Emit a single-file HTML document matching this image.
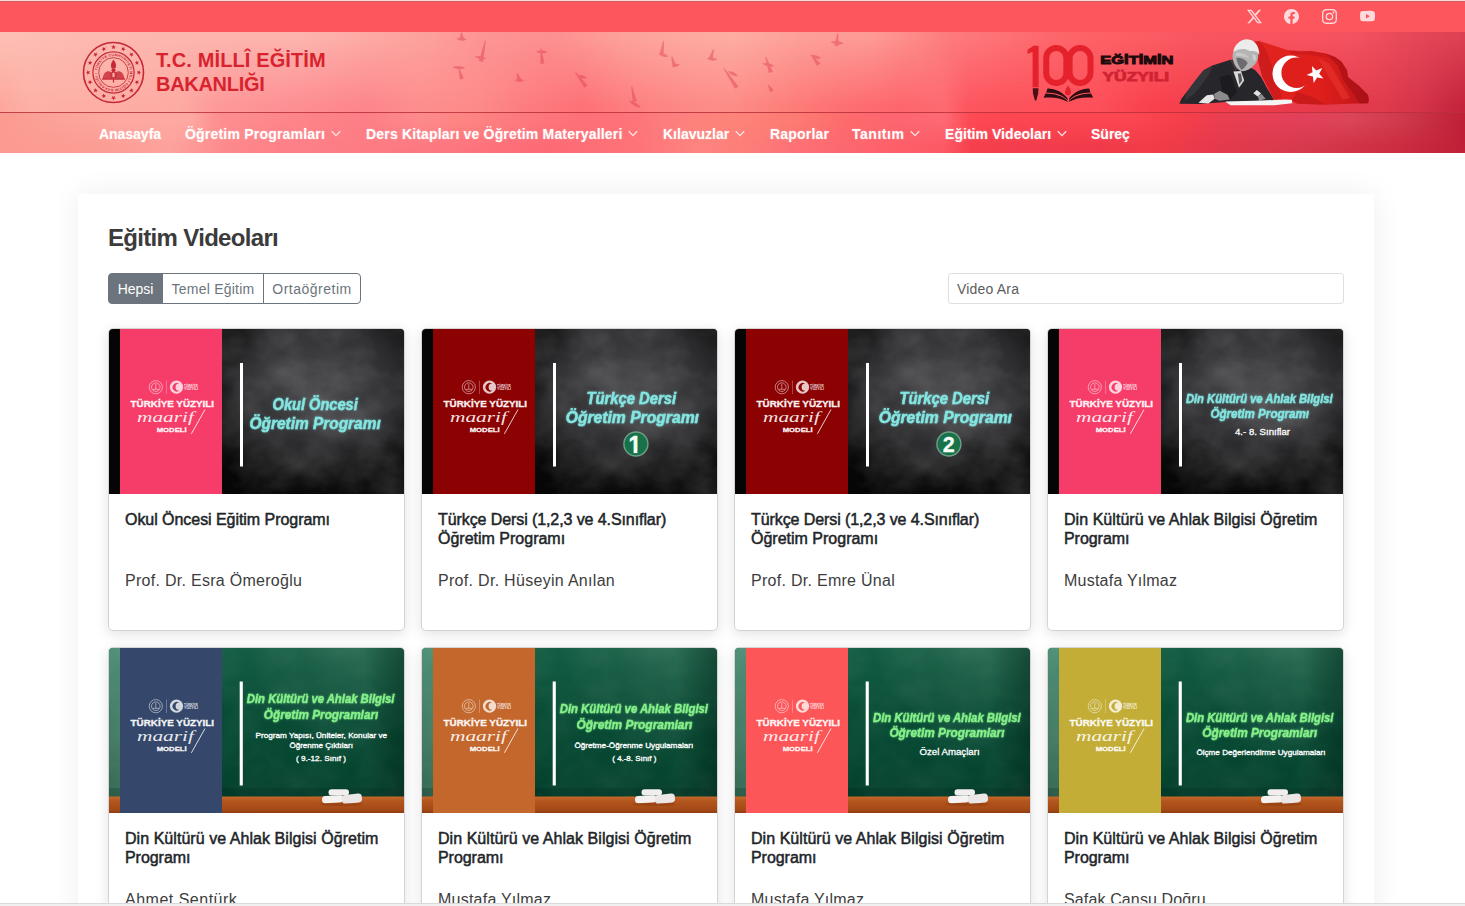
<!DOCTYPE html>
<html lang="tr">
<head>
<meta charset="utf-8">
<title>Eğitim Videoları - T.C. Millî Eğitim Bakanlığı</title>
<style>
*{box-sizing:border-box;margin:0;padding:0}
html,body{width:1465px;height:906px;overflow:hidden;background:#fff}
body{font-family:"Liberation Sans",sans-serif;position:relative;color:#212529}
.abs{position:absolute}
#topline{left:0;top:0;width:1465px;height:2px;background:linear-gradient(180deg,#ffd6d6 0,#ffd6d6 50%,#cb636b 50%,#cb636b 100%)}
#topbar{left:0;top:2px;width:1465px;height:30px;background:#fd565d}
.soc{top:9px;width:15px;height:15px;fill:#ffd9db}
.brand{left:156px;color:#d8232f;font-weight:bold;font-size:20px;line-height:24px;white-space:nowrap}
.nav{top:124px;height:20px;line-height:20px;font-size:14px;font-weight:bold;color:#fff;white-space:nowrap;text-shadow:0 0 2px rgba(255,255,255,.35)}
.chev{top:130px;width:10px;height:7px;fill:none;stroke:#ffe3e3;stroke-width:1.3}
#wrap{left:78px;top:194px;width:1296px;height:760px;background:#fff;box-shadow:0 0 28px rgba(0,0,0,.07)}
h1{left:108px;top:222px;font-size:24px;line-height:32px;font-weight:bold;color:#3b3b3b;white-space:nowrap;letter-spacing:-.68px}
.btn{top:273px;height:31px;font-size:14px;line-height:30px;color:#6c757d;border:1px solid #6c757d;background:#fff;white-space:nowrap;text-align:center}
.btn.on{background:#6c757d;color:#fff;border-radius:4px 0 0 4px}
#search{left:948px;top:273px;width:396px;height:31px;border:1px solid #dfdfdf;border-radius:3px;font-size:14px;line-height:31px;color:#5c5c5c;padding-left:8px;letter-spacing:.19px}
.card{width:297px;height:303px;background:#fff;border:1px solid #d4d4d4;border-radius:5px;box-shadow:0 3px 13px rgba(0,0,0,.12);overflow:hidden}
.thumb{position:absolute;left:0;top:0;width:295px;height:165px;overflow:hidden}
.ct{position:absolute;left:16px;font-size:16px;line-height:19px;font-weight:normal;color:#212529;-webkit-text-stroke:.5px #212529;white-space:nowrap}
.au{position:absolute;left:16px;top:240px;font-size:16px;line-height:24px;color:#3d3d3d;white-space:nowrap}
#botbar{left:0;top:903px;width:1465px;height:3px;background:#f0f0f0;border-top:1px solid #d9d9d9}
</style>
</head>
<body>
<div id="topline" class="abs"></div>
<div id="topbar" class="abs"></div>
<svg class="abs" width="0" height="0" style="left:0;top:0"><defs>
<filter id="glow" x="-10%" y="-40%" width="120%" height="180%"><feGaussianBlur stdDeviation="1.2" result="b"/><feComponentTransfer in="b" result="c"><feFuncA type="linear" slope=".5"/></feComponentTransfer><feMerge><feMergeNode in="c"/><feMergeNode in="SourceGraphic"/></feMerge></filter>
<filter id="chalk" x="0" y="0" width="100%" height="100%"><feTurbulence type="fractalNoise" baseFrequency=".02 .026" numOctaves="4" seed="7"/><feColorMatrix type="matrix" values="0 0 0 0 1  0 0 0 0 1  0 0 0 0 1  1.6 0 0 0 -.55"/></filter>
<filter id="bblur" x="-5%" y="-5%" width="110%" height="110%"><feGaussianBlur stdDeviation=".7"/></filter>
<linearGradient id="gedge" x1="0" y1="0" x2="1" y2="0"><stop offset="0" stop-color="#001a10" stop-opacity="0"/><stop offset="1" stop-color="#001a10" stop-opacity=".35"/></linearGradient>
</defs></svg>
<svg class="abs" style="left:0;top:32px" width="1465" height="121" viewBox="0 0 1465 121" preserveAspectRatio="none">
<defs><linearGradient id="hr1" gradientUnits="userSpaceOnUse" x1="0" y1="0" x2="1465" y2="0"><stop offset="0.0000" stop-color="#fdbfb4"/><stop offset="0.0546" stop-color="#fdb9b0"/><stop offset="0.1365" stop-color="#fdb5ae"/><stop offset="0.2048" stop-color="#fdb4ae"/><stop offset="0.2498" stop-color="#fdaaa4"/><stop offset="0.2935" stop-color="#fda09c"/><stop offset="0.3276" stop-color="#fd9595"/><stop offset="0.3754" stop-color="#fd8f90"/><stop offset="0.4232" stop-color="#fda099"/><stop offset="0.4642" stop-color="#fda89f"/><stop offset="0.4997" stop-color="#fdaca2"/><stop offset="0.5461" stop-color="#fd9f98"/><stop offset="0.5939" stop-color="#fd9a94"/><stop offset="0.6280" stop-color="#fd8886"/><stop offset="0.6485" stop-color="#fd7a7c"/><stop offset="0.6826" stop-color="#fd7275"/><stop offset="0.7167" stop-color="#fd676b"/><stop offset="0.7495" stop-color="#fd6066"/><stop offset="0.7850" stop-color="#fb5c63"/><stop offset="0.8191" stop-color="#f85560"/><stop offset="0.8874" stop-color="#f8525e"/><stop offset="0.9215" stop-color="#f45260"/><stop offset="0.9556" stop-color="#e84a5a"/><stop offset="0.9829" stop-color="#e04455"/><stop offset="1.0000" stop-color="#dc4052"/></linearGradient><linearGradient id="hr2" gradientUnits="userSpaceOnUse" x1="0" y1="0" x2="1465" y2="0"><stop offset="0.0000" stop-color="#fda79c"/><stop offset="0.0205" stop-color="#fdb0a6"/><stop offset="0.0683" stop-color="#fdaea5"/><stop offset="0.1229" stop-color="#fdaaa2"/><stop offset="0.1468" stop-color="#fd9a9a"/><stop offset="0.1911" stop-color="#fd9094"/><stop offset="0.2498" stop-color="#fd858c"/><stop offset="0.2867" stop-color="#fd8e8e"/><stop offset="0.3276" stop-color="#fd8a88"/><stop offset="0.3549" stop-color="#fd7e80"/><stop offset="0.3959" stop-color="#fd7176"/><stop offset="0.4437" stop-color="#fd8382"/><stop offset="0.4778" stop-color="#fd8a86"/><stop offset="0.4997" stop-color="#fd8c86"/><stop offset="0.5392" stop-color="#fd7d79"/><stop offset="0.5734" stop-color="#fd7072"/><stop offset="0.6143" stop-color="#fd666c"/><stop offset="0.6444" stop-color="#fd6a70"/><stop offset="0.6608" stop-color="#fd5660"/><stop offset="0.6826" stop-color="#fd525c"/><stop offset="0.7495" stop-color="#fc4f5a"/><stop offset="0.7850" stop-color="#f9414d"/><stop offset="0.8874" stop-color="#e83a4a"/><stop offset="0.9420" stop-color="#e03a4c"/><stop offset="0.9693" stop-color="#d4344a"/><stop offset="0.9898" stop-color="#c82840"/><stop offset="1.0000" stop-color="#c4243c"/></linearGradient><linearGradient id="hr3" gradientUnits="userSpaceOnUse" x1="0" y1="0" x2="1465" y2="0"><stop offset="0.0000" stop-color="#fc9a8f"/><stop offset="0.0273" stop-color="#fca095"/><stop offset="0.0819" stop-color="#fda9a1"/><stop offset="0.1297" stop-color="#fda9a1"/><stop offset="0.1488" stop-color="#fd8f90"/><stop offset="0.2048" stop-color="#fd8489"/><stop offset="0.2498" stop-color="#fd7e86"/><stop offset="0.2867" stop-color="#fd8a8c"/><stop offset="0.3208" stop-color="#fd8480"/><stop offset="0.3549" stop-color="#fd7a7e"/><stop offset="0.3959" stop-color="#fd7076"/><stop offset="0.4232" stop-color="#fd7278"/><stop offset="0.4642" stop-color="#fd807e"/><stop offset="0.4997" stop-color="#fd8479"/><stop offset="0.5461" stop-color="#fd7a72"/><stop offset="0.5802" stop-color="#fd6a6c"/><stop offset="0.6143" stop-color="#fd6570"/><stop offset="0.6444" stop-color="#fd6a74"/><stop offset="0.6621" stop-color="#fd4a55"/><stop offset="0.6826" stop-color="#fd4652"/><stop offset="0.7495" stop-color="#fc4651"/><stop offset="0.7713" stop-color="#fb4752"/><stop offset="0.8055" stop-color="#f53f4a"/><stop offset="0.8328" stop-color="#ea3e50"/><stop offset="0.8874" stop-color="#e2405a"/><stop offset="0.9215" stop-color="#dc4458"/><stop offset="0.9556" stop-color="#d03a4c"/><stop offset="0.9829" stop-color="#c42a40"/><stop offset="1.0000" stop-color="#be2038"/></linearGradient><linearGradient id="hr4" gradientUnits="userSpaceOnUse" x1="0" y1="0" x2="1465" y2="0"><stop offset="0.0000" stop-color="#fc9a90"/><stop offset="0.0683" stop-color="#fc9c93"/><stop offset="0.1160" stop-color="#fda29c"/><stop offset="0.1365" stop-color="#fd9694"/><stop offset="0.1536" stop-color="#fd8a8c"/><stop offset="0.1911" stop-color="#fd8088"/><stop offset="0.2498" stop-color="#fd7c84"/><stop offset="0.3072" stop-color="#fd7680"/><stop offset="0.3754" stop-color="#fd6a74"/><stop offset="0.4369" stop-color="#fd7478"/><stop offset="0.4778" stop-color="#fd8580"/><stop offset="0.5188" stop-color="#fd7a78"/><stop offset="0.5461" stop-color="#fd6f75"/><stop offset="0.6143" stop-color="#fd5f68"/><stop offset="0.6444" stop-color="#fc5963"/><stop offset="0.6635" stop-color="#f53f4e"/><stop offset="0.7509" stop-color="#f03a4a"/><stop offset="0.7850" stop-color="#f23c47"/><stop offset="0.8328" stop-color="#e4394c"/><stop offset="0.8874" stop-color="#d63a4d"/><stop offset="0.9556" stop-color="#cc2c40"/><stop offset="1.0000" stop-color="#c02038"/></linearGradient>
<linearGradient id="hvm" gradientUnits="userSpaceOnUse" x1="0" y1="0" x2="0" y2="81"><stop offset="0" stop-color="#000"/><stop offset=".08" stop-color="#000"/><stop offset=".92" stop-color="#fff"/><stop offset="1" stop-color="#fff"/></linearGradient>
<linearGradient id="hvn" gradientUnits="userSpaceOnUse" x1="0" y1="81" x2="0" y2="121"><stop offset="0" stop-color="#000"/><stop offset=".2" stop-color="#000"/><stop offset=".85" stop-color="#fff"/><stop offset="1" stop-color="#fff"/></linearGradient>
<mask id="hmask" maskUnits="userSpaceOnUse" x="0" y="0" width="1465" height="81"><rect width="1465" height="81" fill="url(#hvm)"/></mask>
<mask id="nmask" maskUnits="userSpaceOnUse" x="0" y="81" width="1465" height="40"><rect y="81" width="1465" height="40" fill="url(#hvn)"/></mask></defs>
<rect width="1465" height="81" fill="url(#hr1)"/>
<rect width="1465" height="81" fill="url(#hr2)" mask="url(#hmask)"/>
<rect y="81" width="1465" height="40" fill="url(#hr3)"/>
<rect y="81" width="1465" height="40" fill="url(#hr4)" mask="url(#nmask)"/>
<rect y="80" width="1465" height="1" fill="#b8303a" fill-opacity=".85"/>
</svg>
<svg class="abs" style="left:0;top:32px" width="1465" height="121" viewBox="0 32 1465 121" fill="rgba(220,58,78,.42)"><g filter="url(#bblur)">
<path d="M460.9 32.5 L459.8 38.8 L464.0 38.4 L461.9 32.5Z M456.5 38.8 Q461.5 42.3 466.8 39.4 Q461.8 35.9 456.5 38.8Z"/>
<path d="M484.9 40.6 L478.9 61.1 L483.1 61.9 L485.9 40.8Z M474.5 56.6 Q479.9 60.8 486.5 58.8 Q481.1 54.6 474.5 56.6Z"/>
<path d="M458.2 68.1 L459.9 79.6 L463.9 78.4 L459.2 67.9Z M452.6 67.2 Q458.7 70.8 465.2 68.0 Q459.1 64.4 452.6 67.2Z"/>
<path d="M540.4 48.4 L540.3 63.9 L544.5 63.5 L541.4 48.4Z M535.7 51.7 Q541.6 55.0 547.7 51.9 Q541.8 48.6 535.7 51.7Z"/>
<path d="M516.6 73.7 L517.3 80.7 L521.3 79.3 L517.6 73.3Z M514.4 80.0 Q519.1 83.5 524.2 80.6 Q519.5 77.1 514.4 80.0Z"/>
<path d="M575.1 72.7 L584.2 87.8 L587.6 85.4 L575.9 72.1Z M577.2 75.7 Q581.4 79.9 587.0 77.9 Q582.8 73.7 577.2 75.7Z"/>
<path d="M631.2 86.4 L632.7 102.0 L636.9 101.2 L632.2 86.2Z M628.6 100.6 Q633.1 107.0 640.9 107.8 Q636.4 101.4 628.6 100.6Z"/>
<path d="M663.0 41.1 L659.3 55.3 L663.5 55.9 L664.0 41.3Z M658.3 53.5 Q662.5 58.1 668.6 56.6 Q664.4 52.0 658.3 53.5Z"/>
<path d="M671.2 56.7 L672.7 67.4 L676.7 66.2 L672.2 56.5Z M671.7 65.8 Q676.1 68.5 679.8 64.8 Q675.4 62.1 671.7 65.8Z"/>
<path d="M713.1 49.2 L708.6 57.9 L712.6 59.3 L714.1 49.6Z M706.5 58.6 Q711.8 62.3 717.7 59.6 Q712.4 55.9 706.5 58.6Z"/>
<path d="M723.7 68.9 L734.9 88.8 L738.5 86.4 L724.5 68.3Z M727.9 71.2 Q731.5 76.6 738.0 76.2 Q734.4 70.8 727.9 71.2Z"/>
<path d="M837.3 33.2 L834.4 45.7 L838.6 46.1 L838.3 33.4Z M830.2 42.1 Q836.9 45.9 844.1 43.4 Q837.4 39.6 830.2 42.1Z"/>
<path d="M765.3 57.5 L768.8 73.1 L772.8 71.7 L766.3 57.1Z M762.0 63.6 Q767.7 68.0 774.6 66.1 Q768.9 61.7 762.0 63.6Z"/>
<path d="M810.8 55.0 L817.1 66.1 L820.5 63.5 L811.6 54.4Z M810.7 55.2 Q815.0 59.9 821.3 58.5 Q817.0 53.8 810.7 55.2Z"/>
<path d="M767.9 85.3 L770.3 92.5 L773.9 90.3 L768.7 84.7Z"/>
</g></svg>
<svg class="abs soc" style="left:1247px" viewBox="0 0 16 16"><path d="M12.6.75h2.454l-5.36 6.142L16 15.25h-4.937l-3.867-5.07-4.425 5.07H.316l5.733-6.57L0 .75h5.063l3.495 4.633L12.601.75Zm-.86 13.028h1.36L4.323 2.145H2.865z"/></svg>
<svg class="abs soc" style="left:1284px" viewBox="0 0 16 16"><path d="M16 8.049c0-4.446-3.582-8.05-8-8.05C3.58 0-.002 3.603-.002 8.05c0 4.017 2.926 7.347 6.75 7.951v-5.625h-2.03V8.05H6.75V6.275c0-2.017 1.195-3.131 3.022-3.131.876 0 1.791.157 1.791.157v1.98h-1.009c-.993 0-1.303.621-1.303 1.258v1.51h2.218l-.354 2.326H9.25V16c3.824-.604 6.75-3.934 6.75-7.951"/></svg>
<svg class="abs soc" style="left:1321.5px" viewBox="0 0 16 16"><path d="M8 0C5.829 0 5.556.01 4.703.048 3.85.088 3.269.222 2.76.42a3.9 3.9 0 0 0-1.417.923A3.9 3.9 0 0 0 .42 2.76C.222 3.268.087 3.85.048 4.7.01 5.555 0 5.827 0 8.001c0 2.172.01 2.444.048 3.297.04.852.174 1.433.372 1.942.205.526.478.972.923 1.417.444.445.89.719 1.416.923.51.198 1.09.333 1.942.372C5.555 15.99 5.827 16 8 16s2.444-.01 3.298-.048c.851-.04 1.434-.174 1.943-.372a3.9 3.9 0 0 0 1.416-.923c.445-.445.718-.891.923-1.417.197-.509.332-1.09.372-1.942C15.99 10.445 16 10.173 16 8s-.01-2.445-.048-3.299c-.04-.851-.175-1.433-.372-1.941a3.9 3.9 0 0 0-.923-1.417A3.9 3.9 0 0 0 13.24.42c-.51-.198-1.092-.333-1.943-.372C10.443.01 10.172 0 7.998 0zm-.717 1.442h.718c2.136 0 2.389.007 3.232.046.78.035 1.204.166 1.486.275.373.145.64.319.92.599s.453.546.598.92c.11.281.24.705.275 1.485.039.843.047 1.096.047 3.231s-.008 2.389-.047 3.232c-.035.78-.166 1.203-.275 1.485a2.5 2.5 0 0 1-.599.919c-.28.28-.546.453-.92.598-.28.11-.704.24-1.485.276-.843.038-1.096.047-3.232.047s-2.39-.009-3.233-.047c-.78-.036-1.203-.166-1.485-.276a2.5 2.5 0 0 1-.92-.598 2.5 2.5 0 0 1-.6-.92c-.109-.281-.24-.705-.275-1.485-.038-.843-.046-1.096-.046-3.233s.008-2.388.046-3.231c.036-.78.166-1.204.276-1.486.145-.373.319-.64.599-.92s.546-.453.92-.598c.282-.11.705-.24 1.485-.276.738-.034 1.024-.044 2.515-.045zm4.988 1.328a.96.96 0 1 0 0 1.92.96.96 0 0 0 0-1.92m-4.27 1.122a4.109 4.109 0 1 0 0 8.217 4.109 4.109 0 0 0 0-8.217m0 1.441a2.667 2.667 0 1 1 0 5.334 2.667 2.667 0 0 1 0-5.334"/></svg>
<svg class="abs soc" style="left:1359.5px" viewBox="0 0 16 16"><path d="M8.051 1.999h.089c.822.003 4.987.033 6.11.335a2.01 2.01 0 0 1 1.415 1.42c.101.38.172.883.22 1.402l.01.104.022.26.008.104c.065.914.073 1.77.074 1.957v.075c-.001.194-.01 1.108-.082 2.06l-.008.105-.009.104c-.05.572-.124 1.14-.235 1.558a2.01 2.01 0 0 1-1.415 1.42c-1.16.312-5.569.334-6.18.335h-.142c-.309 0-1.587-.006-2.927-.052l-.17-.006-.087-.004-.171-.007-.171-.007c-1.11-.049-2.167-.128-2.654-.26a2.01 2.01 0 0 1-1.415-1.419c-.111-.417-.185-.986-.235-1.558L.09 9.82l-.008-.104A31 31 0 0 1 0 7.68v-.123c.002-.215.01-.958.064-1.778l.007-.103.003-.052.008-.104.022-.26.01-.104c.048-.519.119-1.023.22-1.402a2.01 2.01 0 0 1 1.415-1.42c.487-.13 1.544-.21 2.654-.26l.17-.007.172-.006.086-.003.171-.007A100 100 0 0 1 7.858 2zM6.4 5.209v4.818l4.157-2.408z"/></svg>
<svg class="abs" style="left:78px;top:37px" width="72" height="72" viewBox="78 37 72 72">
<g fill="none" stroke="#c52836">
<circle cx="113.5" cy="72.5" r="30" stroke-width="1.6"/>
<circle cx="113.5" cy="72.5" r="20.6" stroke-width="1.25"/>
<circle cx="113.5" cy="72.5" r="14.8" stroke-width=".85"/>
</g>
<g fill="#c52836">
<polygon points="113.50,44.60 114.12,46.25 115.88,46.33 114.50,47.42 114.97,49.12 113.50,48.15 112.03,49.12 112.50,47.42 111.12,46.33 112.88,46.25"/>
<polygon points="124.18,46.72 124.12,48.48 125.71,49.23 124.02,49.72 123.80,51.46 122.82,50.00 121.09,50.34 122.17,48.95 121.32,47.41 122.98,48.01"/>
<polygon points="133.23,52.77 132.50,54.38 133.69,55.67 131.94,55.48 131.07,57.01 130.72,55.28 128.99,54.93 130.52,54.06 130.33,52.31 131.62,53.50"/>
<polygon points="139.28,61.82 137.99,63.02 138.59,64.68 137.05,63.83 135.66,64.91 136.00,63.18 134.54,62.20 136.28,61.98 136.77,60.29 137.52,61.88"/>
<polygon points="141.40,72.50 139.75,73.12 139.67,74.88 138.58,73.50 136.88,73.97 137.85,72.50 136.88,71.03 138.58,71.50 139.67,70.12 139.75,71.88"/>
<polygon points="139.28,83.18 137.52,83.12 136.77,84.71 136.28,83.02 134.54,82.80 136.00,81.82 135.66,80.09 137.05,81.17 138.59,80.32 137.99,81.98"/>
<polygon points="133.23,92.23 131.62,91.50 130.33,92.69 130.52,90.94 128.99,90.07 130.72,89.72 131.07,87.99 131.94,89.52 133.69,89.33 132.50,90.62"/>
<polygon points="124.18,98.28 122.98,96.99 121.32,97.59 122.17,96.05 121.09,94.66 122.82,95.00 123.80,93.54 124.02,95.28 125.71,95.77 124.12,96.52"/>
<polygon points="113.50,100.40 112.88,98.75 111.12,98.67 112.50,97.58 112.03,95.88 113.50,96.85 114.97,95.88 114.50,97.58 115.88,98.67 114.12,98.75"/>
<polygon points="102.82,98.28 102.88,96.52 101.29,95.77 102.98,95.28 103.20,93.54 104.18,95.00 105.91,94.66 104.83,96.05 105.68,97.59 104.02,96.99"/>
<polygon points="93.77,92.23 94.50,90.62 93.31,89.33 95.06,89.52 95.93,87.99 96.28,89.72 98.01,90.07 96.48,90.94 96.67,92.69 95.38,91.50"/>
<polygon points="87.72,83.18 89.01,81.98 88.41,80.32 89.95,81.17 91.34,80.09 91.00,81.82 92.46,82.80 90.72,83.02 90.23,84.71 89.48,83.12"/>
<polygon points="85.60,72.50 87.25,71.88 87.33,70.12 88.42,71.50 90.12,71.03 89.15,72.50 90.12,73.97 88.42,73.50 87.33,74.88 87.25,73.12"/>
<polygon points="87.72,61.82 89.48,61.88 90.23,60.29 90.72,61.98 92.46,62.20 91.00,63.18 91.34,64.91 89.95,63.83 88.41,64.68 89.01,63.02"/>
<polygon points="93.77,52.77 95.38,53.50 96.67,52.31 96.48,54.06 98.01,54.93 96.28,55.28 95.93,57.01 95.06,55.48 93.31,55.67 94.50,54.38"/>
<polygon points="102.82,46.72 104.02,48.01 105.68,47.41 104.83,48.95 105.91,50.34 104.18,50.00 103.20,51.46 102.98,49.72 101.29,49.23 102.88,48.48"/>
</g>
<defs><path id="ringp" d="M 97.1 72.5 a 16.4 16.4 0 1 1 32.8 0 a 16.4 16.4 0 1 1 -32.8 0"/></defs>
<text font-family="Liberation Sans, sans-serif" font-size="3.6" font-weight="bold" fill="#c52836" letter-spacing=".25"><textPath href="#ringp" startOffset="2">TÜRKİYE CUMHURİYETİ MİLLÎ EĞİTİM BAKANLIĞI • 1920 •</textPath></text>
<g fill="#c52836">
<path d="M102.5 79.0 C103.5 70.5 109.5 69.5 112.5 73.5 L112.5 79.0Z" opacity=".8"/>
<path d="M124.5 79.0 C123.5 70.5 117.5 69.5 114.5 73.5 L114.5 79.0Z" opacity=".8"/>
<rect x="102.0" y="78.5" width="23" height="1.2"/>
<path d="M113.5 59.5 C116.5 63.5 116.5 66.5 115.1 68.5 L111.9 68.5 C110.5 66.5 110.5 63.5 113.5 59.5Z"/>
<circle cx="113.5" cy="70.3" r="2"/>
<circle cx="113.5" cy="75.1" r="2.9" fill="none" stroke="#c52836" stroke-width="1"/>
<rect x="112.9" y="77.5" width="1.2" height="5"/>
</g></svg>
<div class="abs brand" style="top:47.5px;letter-spacing:.12px">T.C. MİLLÎ EĞİTİM</div>
<div class="abs brand" style="top:71.5px;letter-spacing:-.3px">BAKANLIĞI</div>
<div class="abs nav" style="left:99px;letter-spacing:-0.030px">Anasayfa</div>
<div class="abs nav" style="left:185px;letter-spacing:0.203px">Öğretim Programları</div>
<div class="abs nav" style="left:366px;letter-spacing:0.177px">Ders Kitapları ve Öğretim Materyalleri</div>
<div class="abs nav" style="left:663px;letter-spacing:0.010px">Kılavuzlar</div>
<div class="abs nav" style="left:770px;letter-spacing:0.190px">Raporlar</div>
<div class="abs nav" style="left:852px;letter-spacing:0.531px">Tanıtım</div>
<div class="abs nav" style="left:945px;letter-spacing:0.045px">Eğitim Videoları</div>
<div class="abs nav" style="left:1091px;letter-spacing:0.000px">Süreç</div>
<svg class="abs chev" style="left:331px" viewBox="0 0 10 7"><path d="M.8 1.2 5 5.6 9.2 1.2"/></svg>
<svg class="abs chev" style="left:628px" viewBox="0 0 10 7"><path d="M.8 1.2 5 5.6 9.2 1.2"/></svg>
<svg class="abs chev" style="left:735px" viewBox="0 0 10 7"><path d="M.8 1.2 5 5.6 9.2 1.2"/></svg>
<svg class="abs chev" style="left:910px" viewBox="0 0 10 7"><path d="M.8 1.2 5 5.6 9.2 1.2"/></svg>
<svg class="abs chev" style="left:1057px" viewBox="0 0 10 7"><path d="M.8 1.2 5 5.6 9.2 1.2"/></svg>
<svg class="abs" style="left:1020px;top:36px" width="160" height="74" viewBox="1020 36 160 74">
<path fill="#e5212b" d="M1038.6 45.8 L1033.6 45.8 L1027.6 49.8 L1027.6 54 L1032.6 51.8 L1032.6 87.3 L1038.6 87.3Z"/>
<path fill="#4a1018" d="M1032.7 88.2 L1038.5 88.2 L1038.2 93.5 L1036.3 100.4 L1034.9 100.4 L1033 93.5Z"/>
<rect x="1046.25" y="48.05" width="20.1" height="34.9" rx="10.05" fill="none" stroke="#e5212b" stroke-width="6"/>
<rect x="1069.6" y="48.05" width="20.9" height="34.9" rx="10.4" fill="none" stroke="#e5212b" stroke-width="6"/>
<path fill="#e5212b" d="M1068 85.6 C1070.8 89.5 1071.6 92 1070.6 94 C1069.6 95.8 1066.4 95.8 1065.4 94 C1064.4 92 1065.2 89.5 1068 85.6Z"/>
<g fill="#2b0d12">
<path d="M1047.5 88.6 C1056 89 1063 92.5 1067.6 98.6 L1067.6 99.9 C1062 94.6 1055 92.6 1046.2 92.4Z"/>
<path d="M1045.6 93.6 C1055 93.8 1062 96 1067.6 100.8 L1067.6 101.8 C1061 98.2 1053 96.8 1043.6 97.8Z"/>
<path d="M1089.2 88.6 C1080.7 89 1073.7 92.5 1069.1 98.6 L1069.1 99.9 C1074.7 94.6 1081.7 92.6 1090.5 92.4Z"/>
<path d="M1091.1 93.6 C1081.7 93.8 1074.7 96 1069.1 100.8 L1069.1 101.8 C1075.7 98.2 1083.7 96.8 1093.1 97.8Z"/>
</g>
<text x="1100.3" y="63.9" font-family="Liberation Sans, sans-serif" font-weight="bold" font-size="11.4" fill="#1c0a0d" stroke="#1c0a0d" stroke-width=".9" textLength="73.2" lengthAdjust="spacingAndGlyphs">EĞİTİMİN</text>
<text x="1102.5" y="80.8" font-family="Liberation Sans, sans-serif" font-weight="bold" font-size="12.5" fill="#cf2334" stroke="#cf2334" stroke-width=".75" textLength="66.6" lengthAdjust="spacingAndGlyphs">YÜZYILI</text>
</svg>
<svg class="abs" style="left:1170px;top:32px" width="210" height="80" viewBox="1170 32 210 80">
<defs><linearGradient id="flg" x1="0" y1="0" x2="1" y2="0"><stop offset="0" stop-color="#e2241f"/><stop offset=".55" stop-color="#df1f1c"/><stop offset=".8" stop-color="#cf1a1a"/><stop offset="1" stop-color="#b81518"/></linearGradient></defs>
<polygon fill="url(#flg)" points="1253.0,42.0 1259.1,41.1 1272.0,45.0 1287.8,50.2 1300.0,51.6 1310.7,51.1 1326.0,53.5 1335.0,57.0 1341.3,61.6 1347.1,70.2 1348.0,76.9 1358.5,85.5 1368.1,95.1 1369.0,100.0 1368.1,103.2 1349.9,103.7 1326.0,104.7 1297.4,103.7 1291.6,100.8 1274.0,99.5 1262.0,76.0"/>
<polygon fill="#9e0f14" opacity=".55" points="1326.0,53.5 1335.0,57.0 1341.3,61.6 1347.1,70.2 1348.0,76.9 1358.5,85.5 1368.1,95.1 1368.1,103.2 1360.0,103.4 1352.0,92.0 1343.0,80.0 1338.0,66.0"/>
<polygon fill="#f2403a" opacity=".4" points="1318.0,58.0 1330.0,64.0 1339.0,80.0 1350.0,98.0 1343.0,100.0 1332.0,82.0"/>
<polygon fill="#a91116" opacity=".4" points="1297.0,92.0 1312.0,97.0 1326.0,104.7 1297.4,103.7 1291.6,100.8"/>
<polygon fill="#b81418" opacity=".45" points="1259.0,41.1 1266.0,50.0 1276.0,78.0 1282.0,98.0 1274.0,99.5 1262.0,76.0 1253.0,42.0"/>
<polygon fill="#ad1216" opacity=".3" points="1287.8,50.2 1310.7,51.1 1326.0,53.5 1330.0,58.0 1310.0,55.0 1292.0,54.0"/>
<circle cx="1290.7" cy="73.8" r="18.2" fill="#fff"/>
<circle cx="1296.6" cy="72.8" r="15.2" fill="#df1f1c"/>
<polygon fill="#fff" points="1306.6,75.0 1312.5,72.3 1311.9,65.9 1316.3,70.6 1322.3,68.1 1319.2,73.7 1323.4,78.6 1317.1,77.4 1313.7,82.9 1312.9,76.5"/>
<polygon fill="#27262b" points="1179.4,103.7 1181.4,98.8 1187.7,90.8 1195.7,80.1 1203.6,70.2 1212.4,65.4 1222.7,62.2 1230.6,59.8 1235.4,69.4 1248.1,66.2 1255.3,70.2 1261.2,77.3 1266.4,86.9 1272.0,96.4 1274.0,100.8 1254.5,101.6 1225.9,102.0 1198.8,104.0"/>
<polygon fill="#3d3c42" opacity=".7" points="1187.7,90.8 1195.7,80.1 1203.6,70.2 1212.4,66.2 1208.4,75.7 1201.2,85.3 1193.3,94.8 1184.5,100.4"/>
<polygon fill="#1a191d" opacity=".8" points="1219.5,77.3 1230.6,74.2 1237.0,91.6 1230.6,99.6 1222.7,91.6"/>
<polygon fill="#3a3a3e" points="1230.6,59.8 1235.4,69.4 1248.1,66.2 1246.5,59.8"/>
<path fill="#b4b4b4" d="M1234.2 50.3 C1238.6 47.9 1250.5 47.9 1257.7 51.9 C1259.3 56.7 1257.7 62.2 1252.9 66.2 C1249.7 69.4 1245.0 71.8 1241.0 71.0 C1237.0 69.4 1233.8 64.6 1233.0 59.8 C1232.2 55.9 1232.6 52.7 1234.2 50.3 Z"/>
<path fill="#ececec" d="M1233.4 51.9 C1233.8 45.5 1240.2 39.2 1247.3 39.2 C1254.5 39.6 1259.3 45.5 1259.4 55.1 C1258.5 51.9 1254.5 50.3 1249.7 51.1 C1245.0 47.9 1238.6 48.7 1233.4 51.9 Z"/>
<path fill="#6b6b70" d="M1236.2 57.9 C1240.2 57.1 1245.7 59.4 1247.7 63.0 C1245.7 66.6 1243.4 69.4 1241.4 69.8 C1239.4 67.4 1237.4 63.4 1236.2 57.9 Z"/>
<path fill="#c9c9c9" d="M1236.2 53.1 C1241.0 51.9 1246.5 54.3 1249.7 58.3 C1246.5 57.1 1241.0 55.5 1235.8 56.3 Z"/>
<path fill="#cfcfcf" d="M1252.5 54.7 C1255.3 53.9 1256.9 56.7 1255.3 60.6 C1253.7 61.4 1252.5 59.1 1252.5 54.7 Z"/>
<polygon fill="#dcdcdc" points="1233.4,71.4 1241.0,71.0 1244.2,80.5 1239.0,87.7"/>
<polygon fill="#55555a" points="1237.8,73.4 1241.0,73.4 1242.2,80.5 1239.4,84.5"/>
<polygon fill="#e6e6e6" points="1198.4,102.8 1206.8,95.2 1213.2,94.4 1214.7,98.8 1208.4,103.6"/>
<polygon fill="#8c8c8c" points="1214.0,94.0 1219.5,90.8 1227.5,94.8 1229.8,99.6 1219.5,100.8 1214.7,98.8"/>
<polygon fill="#e0e0e0" points="1253.3,93.2 1256.9,90.1 1261.2,93.6 1257.7,96.4"/>
<polygon fill="#8c8c8c" points="1257.7,96.4 1261.6,94.0 1265.6,98.8 1259.3,100.8"/>
<polygon fill="#f4f4f4" points="1225.1,101.6 1254.5,100.8 1285.0,99.6 1291.9,99.8 1292.2,103.2 1274.4,105.3 1230.6,105.2"/>
</svg>
<div id="wrap" class="abs"></div>
<h1 class="abs">Eğitim Videoları</h1>
<div class="abs btn on" style="left:108px;width:55px;letter-spacing:-.06px">Hepsi</div>
<div class="abs btn" style="left:162px;width:102px;letter-spacing:.24px">Temel Eğitim</div>
<div class="abs btn" style="left:263px;width:98px;border-radius:0 4px 4px 0;letter-spacing:.5px">Ortaöğretim</div>
<div id="search" class="abs">Video Ara</div>
<div class="abs card" style="left:108px;top:328px">
<svg class="thumb" width="295" height="165" viewBox="0 0 295 165">
<defs><radialGradient id="bg1" cx="54%" cy="38%" r="66%"><stop offset="0" stop-color="#48484b"/><stop offset=".38" stop-color="#3b3b3e"/><stop offset=".68" stop-color="#29292b"/><stop offset=".9" stop-color="#151516"/><stop offset="1" stop-color="#0b0b0b"/></radialGradient><linearGradient id="bd1" x1="0" y1="0" x2="0" y2="1"><stop offset=".55" stop-color="#000" stop-opacity="0"/><stop offset="1" stop-color="#000" stop-opacity=".5"/></linearGradient></defs>
<rect width="295" height="165" fill="#050505"/>
<rect x="113" y="0" width="182" height="165" fill="url(#bg1)"/>
<rect x="113" y="0" width="182" height="165" fill="url(#bd1)"/>
<rect x="113" y="0" width="182" height="165" filter="url(#chalk)" opacity=".17"/>
<rect x="11" y="0" width="102" height="165" fill="#f63d69"/>
<g fill="none" stroke="#fff" stroke-opacity=".62" stroke-width=".8"><circle cx="46.8" cy="58.2" r="6.6"/><circle cx="46.8" cy="58.2" r="4.3"/><path d="M43.6 60.3h6.4M46.8 55v5"/></g>
<rect x="57.1" y="51.5" width=".6" height="13.5" fill="#fff" fill-opacity=".45"/>
<circle cx="67.5" cy="58.2" r="6.6" fill="#fff" fill-opacity=".78"/>
<path d="M70.2 54.6a4.3 4.3 0 1 0 0 7.2a3.5 3.5 0 1 1 0-7.2z" fill="#f63d69"/>
<text x="75" y="57.6" font-family="Liberation Sans, sans-serif" font-weight="bold" font-size="3" fill="#fff" fill-opacity=".85" textLength="14" lengthAdjust="spacingAndGlyphs">TÜRKİYE</text>
<text x="75" y="61" font-family="Liberation Sans, sans-serif" font-weight="bold" font-size="3" fill="#fff" fill-opacity=".85" textLength="14" lengthAdjust="spacingAndGlyphs">YÜZYILI</text>
<text x="21.6" y="77.7" font-family="Liberation Sans, sans-serif" font-weight="bold" font-size="8.5" fill="#fff" fill-opacity=".93" stroke="#fff" stroke-width=".35" stroke-opacity=".9" textLength="83.5" lengthAdjust="spacingAndGlyphs">TÜRKİYE YÜZYILI</text>
<text x="28" y="93.4" font-family="Liberation Serif, serif" font-style="italic" font-size="14" fill="#fff" fill-opacity=".9" textLength="57" lengthAdjust="spacingAndGlyphs">maarif</text>
<path d="M96 80.5 L82.4 104.8" stroke="#fff" stroke-opacity=".9" stroke-width=".9" fill="none"/>
<text x="47.7" y="103.3" font-family="Liberation Sans, sans-serif" font-weight="bold" font-size="6.2" fill="#fff" fill-opacity=".93" stroke="#fff" stroke-width=".3" stroke-opacity=".9" textLength="30" lengthAdjust="spacingAndGlyphs">MODELİ</text>
<rect x="131" y="34" width="3" height="103.5" fill="#fff"/>
<text filter="url(#glow)" x="163.6" y="81" font-family="Liberation Sans, sans-serif" font-weight="bold" font-style="italic" font-size="17" fill="#84e6e2" stroke="#84e6e2" stroke-width="0.45" textLength="85.1" lengthAdjust="spacingAndGlyphs">Okul Öncesi</text>
<text filter="url(#glow)" x="140.6" y="100" font-family="Liberation Sans, sans-serif" font-weight="bold" font-style="italic" font-size="17" fill="#84e6e2" stroke="#84e6e2" stroke-width="0.45" textLength="131.1" lengthAdjust="spacingAndGlyphs">Öğretim Programı</text>
</svg>
<div class="ct" style="top:181px;letter-spacing:-0.05px">Okul Öncesi Eğitim Programı</div>
<div class="au" style="letter-spacing:0.28px">Prof. Dr. Esra Ömeroğlu</div>
</div>
<div class="abs card" style="left:421px;top:328px">
<svg class="thumb" width="295" height="165" viewBox="0 0 295 165">
<defs><radialGradient id="bg2" cx="54%" cy="38%" r="66%"><stop offset="0" stop-color="#48484b"/><stop offset=".38" stop-color="#3b3b3e"/><stop offset=".68" stop-color="#29292b"/><stop offset=".9" stop-color="#151516"/><stop offset="1" stop-color="#0b0b0b"/></radialGradient><linearGradient id="bd2" x1="0" y1="0" x2="0" y2="1"><stop offset=".55" stop-color="#000" stop-opacity="0"/><stop offset="1" stop-color="#000" stop-opacity=".5"/></linearGradient></defs>
<rect width="295" height="165" fill="#050505"/>
<rect x="113" y="0" width="182" height="165" fill="url(#bg2)"/>
<rect x="113" y="0" width="182" height="165" fill="url(#bd2)"/>
<rect x="113" y="0" width="182" height="165" filter="url(#chalk)" opacity=".17"/>
<rect x="11" y="0" width="102" height="165" fill="#8c0101"/>
<g fill="none" stroke="#fff" stroke-opacity=".62" stroke-width=".8"><circle cx="46.8" cy="58.2" r="6.6"/><circle cx="46.8" cy="58.2" r="4.3"/><path d="M43.6 60.3h6.4M46.8 55v5"/></g>
<rect x="57.1" y="51.5" width=".6" height="13.5" fill="#fff" fill-opacity=".45"/>
<circle cx="67.5" cy="58.2" r="6.6" fill="#fff" fill-opacity=".78"/>
<path d="M70.2 54.6a4.3 4.3 0 1 0 0 7.2a3.5 3.5 0 1 1 0-7.2z" fill="#8c0101"/>
<text x="75" y="57.6" font-family="Liberation Sans, sans-serif" font-weight="bold" font-size="3" fill="#fff" fill-opacity=".85" textLength="14" lengthAdjust="spacingAndGlyphs">TÜRKİYE</text>
<text x="75" y="61" font-family="Liberation Sans, sans-serif" font-weight="bold" font-size="3" fill="#fff" fill-opacity=".85" textLength="14" lengthAdjust="spacingAndGlyphs">YÜZYILI</text>
<text x="21.6" y="77.7" font-family="Liberation Sans, sans-serif" font-weight="bold" font-size="8.5" fill="#fff" fill-opacity=".93" stroke="#fff" stroke-width=".35" stroke-opacity=".9" textLength="83.5" lengthAdjust="spacingAndGlyphs">TÜRKİYE YÜZYILI</text>
<text x="28" y="93.4" font-family="Liberation Serif, serif" font-style="italic" font-size="14" fill="#fff" fill-opacity=".9" textLength="57" lengthAdjust="spacingAndGlyphs">maarif</text>
<path d="M96 80.5 L82.4 104.8" stroke="#fff" stroke-opacity=".9" stroke-width=".9" fill="none"/>
<text x="47.7" y="103.3" font-family="Liberation Sans, sans-serif" font-weight="bold" font-size="6.2" fill="#fff" fill-opacity=".93" stroke="#fff" stroke-width=".3" stroke-opacity=".9" textLength="30" lengthAdjust="spacingAndGlyphs">MODELİ</text>
<rect x="131" y="34" width="3" height="103.5" fill="#fff"/>
<text filter="url(#glow)" x="164.5" y="75" font-family="Liberation Sans, sans-serif" font-weight="bold" font-style="italic" font-size="16.5" fill="#84e6e2" stroke="#84e6e2" stroke-width="0.45" textLength="89.5" lengthAdjust="spacingAndGlyphs">Türkçe Dersi</text>
<text filter="url(#glow)" x="143.7" y="93.7" font-family="Liberation Sans, sans-serif" font-weight="bold" font-style="italic" font-size="16.5" fill="#84e6e2" stroke="#84e6e2" stroke-width="0.45" textLength="133.3" lengthAdjust="spacingAndGlyphs">Öğretim  Programı</text>
<circle cx="213.9" cy="115" r="12" fill="#17724a" stroke="#6f9f88" stroke-width="1.4"/><clipPath id="one"><rect x="200" y="100" width="30" height="21"/><rect x="211.6" y="120.9" width="3.8" height="3.3"/></clipPath><text clip-path="url(#one)" x="213" y="123.6" text-anchor="middle" font-family="Liberation Sans, sans-serif" font-weight="bold" font-size="23" fill="#f4fff8" stroke="#f4fff8" stroke-width=".45">1</text>
</svg>
<div class="ct" style="top:181px;letter-spacing:-0.09px">Türkçe Dersi (1,2,3 ve 4.Sınıflar)</div>
<div class="ct" style="top:200px;letter-spacing:0px">Öğretim Programı</div>
<div class="au" style="letter-spacing:0.3px">Prof. Dr. Hüseyin Anılan</div>
</div>
<div class="abs card" style="left:734px;top:328px">
<svg class="thumb" width="295" height="165" viewBox="0 0 295 165">
<defs><radialGradient id="bg3" cx="54%" cy="38%" r="66%"><stop offset="0" stop-color="#48484b"/><stop offset=".38" stop-color="#3b3b3e"/><stop offset=".68" stop-color="#29292b"/><stop offset=".9" stop-color="#151516"/><stop offset="1" stop-color="#0b0b0b"/></radialGradient><linearGradient id="bd3" x1="0" y1="0" x2="0" y2="1"><stop offset=".55" stop-color="#000" stop-opacity="0"/><stop offset="1" stop-color="#000" stop-opacity=".5"/></linearGradient></defs>
<rect width="295" height="165" fill="#050505"/>
<rect x="113" y="0" width="182" height="165" fill="url(#bg3)"/>
<rect x="113" y="0" width="182" height="165" fill="url(#bd3)"/>
<rect x="113" y="0" width="182" height="165" filter="url(#chalk)" opacity=".17"/>
<rect x="11" y="0" width="102" height="165" fill="#8c0101"/>
<g fill="none" stroke="#fff" stroke-opacity=".62" stroke-width=".8"><circle cx="46.8" cy="58.2" r="6.6"/><circle cx="46.8" cy="58.2" r="4.3"/><path d="M43.6 60.3h6.4M46.8 55v5"/></g>
<rect x="57.1" y="51.5" width=".6" height="13.5" fill="#fff" fill-opacity=".45"/>
<circle cx="67.5" cy="58.2" r="6.6" fill="#fff" fill-opacity=".78"/>
<path d="M70.2 54.6a4.3 4.3 0 1 0 0 7.2a3.5 3.5 0 1 1 0-7.2z" fill="#8c0101"/>
<text x="75" y="57.6" font-family="Liberation Sans, sans-serif" font-weight="bold" font-size="3" fill="#fff" fill-opacity=".85" textLength="14" lengthAdjust="spacingAndGlyphs">TÜRKİYE</text>
<text x="75" y="61" font-family="Liberation Sans, sans-serif" font-weight="bold" font-size="3" fill="#fff" fill-opacity=".85" textLength="14" lengthAdjust="spacingAndGlyphs">YÜZYILI</text>
<text x="21.6" y="77.7" font-family="Liberation Sans, sans-serif" font-weight="bold" font-size="8.5" fill="#fff" fill-opacity=".93" stroke="#fff" stroke-width=".35" stroke-opacity=".9" textLength="83.5" lengthAdjust="spacingAndGlyphs">TÜRKİYE YÜZYILI</text>
<text x="28" y="93.4" font-family="Liberation Serif, serif" font-style="italic" font-size="14" fill="#fff" fill-opacity=".9" textLength="57" lengthAdjust="spacingAndGlyphs">maarif</text>
<path d="M96 80.5 L82.4 104.8" stroke="#fff" stroke-opacity=".9" stroke-width=".9" fill="none"/>
<text x="47.7" y="103.3" font-family="Liberation Sans, sans-serif" font-weight="bold" font-size="6.2" fill="#fff" fill-opacity=".93" stroke="#fff" stroke-width=".3" stroke-opacity=".9" textLength="30" lengthAdjust="spacingAndGlyphs">MODELİ</text>
<rect x="131" y="34" width="3" height="103.5" fill="#fff"/>
<text filter="url(#glow)" x="164.5" y="75" font-family="Liberation Sans, sans-serif" font-weight="bold" font-style="italic" font-size="16.5" fill="#84e6e2" stroke="#84e6e2" stroke-width="0.45" textLength="89.5" lengthAdjust="spacingAndGlyphs">Türkçe Dersi</text>
<text filter="url(#glow)" x="143.7" y="93.7" font-family="Liberation Sans, sans-serif" font-weight="bold" font-style="italic" font-size="16.5" fill="#84e6e2" stroke="#84e6e2" stroke-width="0.45" textLength="133.3" lengthAdjust="spacingAndGlyphs">Öğretim  Programı</text>
<circle cx="213.9" cy="115" r="12" fill="#17724a" stroke="#6f9f88" stroke-width="1.4"/><text x="213.8" y="123.2" text-anchor="middle" font-family="Liberation Sans, sans-serif" font-weight="bold" font-size="21.5" fill="#f4fff8" stroke="#f4fff8" stroke-width=".3">2</text>
</svg>
<div class="ct" style="top:181px;letter-spacing:-0.09px">Türkçe Dersi (1,2,3 ve 4.Sınıflar)</div>
<div class="ct" style="top:200px;letter-spacing:0px">Öğretim Programı</div>
<div class="au" style="letter-spacing:0.28px">Prof. Dr. Emre Ünal</div>
</div>
<div class="abs card" style="left:1047px;top:328px">
<svg class="thumb" width="295" height="165" viewBox="0 0 295 165">
<defs><radialGradient id="bg4" cx="54%" cy="38%" r="66%"><stop offset="0" stop-color="#48484b"/><stop offset=".38" stop-color="#3b3b3e"/><stop offset=".68" stop-color="#29292b"/><stop offset=".9" stop-color="#151516"/><stop offset="1" stop-color="#0b0b0b"/></radialGradient><linearGradient id="bd4" x1="0" y1="0" x2="0" y2="1"><stop offset=".55" stop-color="#000" stop-opacity="0"/><stop offset="1" stop-color="#000" stop-opacity=".5"/></linearGradient></defs>
<rect width="295" height="165" fill="#050505"/>
<rect x="113" y="0" width="182" height="165" fill="url(#bg4)"/>
<rect x="113" y="0" width="182" height="165" fill="url(#bd4)"/>
<rect x="113" y="0" width="182" height="165" filter="url(#chalk)" opacity=".17"/>
<rect x="11" y="0" width="102" height="165" fill="#f63d69"/>
<g fill="none" stroke="#fff" stroke-opacity=".62" stroke-width=".8"><circle cx="46.8" cy="58.2" r="6.6"/><circle cx="46.8" cy="58.2" r="4.3"/><path d="M43.6 60.3h6.4M46.8 55v5"/></g>
<rect x="57.1" y="51.5" width=".6" height="13.5" fill="#fff" fill-opacity=".45"/>
<circle cx="67.5" cy="58.2" r="6.6" fill="#fff" fill-opacity=".78"/>
<path d="M70.2 54.6a4.3 4.3 0 1 0 0 7.2a3.5 3.5 0 1 1 0-7.2z" fill="#f63d69"/>
<text x="75" y="57.6" font-family="Liberation Sans, sans-serif" font-weight="bold" font-size="3" fill="#fff" fill-opacity=".85" textLength="14" lengthAdjust="spacingAndGlyphs">TÜRKİYE</text>
<text x="75" y="61" font-family="Liberation Sans, sans-serif" font-weight="bold" font-size="3" fill="#fff" fill-opacity=".85" textLength="14" lengthAdjust="spacingAndGlyphs">YÜZYILI</text>
<text x="21.6" y="77.7" font-family="Liberation Sans, sans-serif" font-weight="bold" font-size="8.5" fill="#fff" fill-opacity=".93" stroke="#fff" stroke-width=".35" stroke-opacity=".9" textLength="83.5" lengthAdjust="spacingAndGlyphs">TÜRKİYE YÜZYILI</text>
<text x="28" y="93.4" font-family="Liberation Serif, serif" font-style="italic" font-size="14" fill="#fff" fill-opacity=".9" textLength="57" lengthAdjust="spacingAndGlyphs">maarif</text>
<path d="M96 80.5 L82.4 104.8" stroke="#fff" stroke-opacity=".9" stroke-width=".9" fill="none"/>
<text x="47.7" y="103.3" font-family="Liberation Sans, sans-serif" font-weight="bold" font-size="6.2" fill="#fff" fill-opacity=".93" stroke="#fff" stroke-width=".3" stroke-opacity=".9" textLength="30" lengthAdjust="spacingAndGlyphs">MODELİ</text>
<rect x="131" y="34" width="3" height="103.5" fill="#fff"/>
<text filter="url(#glow)" x="137.9" y="73.6" font-family="Liberation Sans, sans-serif" font-weight="bold" font-style="italic" font-size="13" fill="#84e6e2" stroke="#84e6e2" stroke-width="0.38" textLength="146.8" lengthAdjust="spacingAndGlyphs">Din Kültürü ve Ahlak Bilgisi</text>
<text filter="url(#glow)" x="162.4" y="88.6" font-family="Liberation Sans, sans-serif" font-weight="bold" font-style="italic" font-size="13" fill="#84e6e2" stroke="#84e6e2" stroke-width="0.38" textLength="98.7" lengthAdjust="spacingAndGlyphs">Öğretim Programı</text>
<text x="187" y="106.1" font-family="Liberation Sans, sans-serif" font-weight="normal" font-size="9.5" fill="#fff" stroke="#fff" stroke-width="0.3" textLength="55.0" lengthAdjust="spacingAndGlyphs">4.- 8. Sınıflar</text>
</svg>
<div class="ct" style="top:181px;letter-spacing:0.05px">Din Kültürü ve Ahlak Bilgisi Öğretim</div>
<div class="ct" style="top:200px;letter-spacing:-0.05px">Programı</div>
<div class="au" style="letter-spacing:0.23px">Mustafa Yılmaz</div>
</div>
<div class="abs card" style="left:108px;top:647px">
<svg class="thumb" width="295" height="165" viewBox="0 0 295 165">
<defs><linearGradient id="gg5" x1="0" y1="0" x2="0" y2="1"><stop offset="0" stop-color="#145d44"/><stop offset=".35" stop-color="#0a4e37"/><stop offset=".75" stop-color="#05452f"/><stop offset="1" stop-color="#033c2a"/></linearGradient><radialGradient id="gh5" gradientUnits="userSpaceOnUse" cx="250" cy="-5" r="110"><stop offset="0" stop-color="#7aa08e" stop-opacity=".26"/><stop offset=".6" stop-color="#5c8a76" stop-opacity=".1"/><stop offset="1" stop-color="#5c8a76" stop-opacity="0"/></radialGradient><linearGradient id="gs5" x1="0" y1="0" x2="0" y2="1"><stop offset="0" stop-color="#4e8e76"/><stop offset="1" stop-color="#346650"/></linearGradient><linearGradient id="wd5" x1="0" y1="0" x2="0" y2="1"><stop offset="0" stop-color="#c4682b"/><stop offset=".3" stop-color="#b1551d"/><stop offset=".8" stop-color="#a44a17"/><stop offset="1" stop-color="#8f3c12"/></linearGradient></defs>
<rect width="295" height="165" fill="url(#gg5)"/>
<rect width="295" height="165" fill="url(#gh5)"/>
<rect width="11" height="165" fill="url(#gs5)"/>
<rect x="255" y="0" width="40" height="165" fill="url(#gedge)"/>
<rect x="0" y="140" width="295" height="9" fill="#02231a" fill-opacity=".22"/>
<rect x="0" y="0" width="295" height="149" filter="url(#chalk)" opacity=".07"/>
<rect x="0" y="148.5" width="295" height="16.5" fill="url(#wd5)"/>
<rect x="11" y="0" width="102" height="165" fill="#35486b"/>
<g fill="none" stroke="#fff" stroke-opacity=".62" stroke-width=".8"><circle cx="46.8" cy="58.2" r="6.6"/><circle cx="46.8" cy="58.2" r="4.3"/><path d="M43.6 60.3h6.4M46.8 55v5"/></g>
<rect x="57.1" y="51.5" width=".6" height="13.5" fill="#fff" fill-opacity=".45"/>
<circle cx="67.5" cy="58.2" r="6.6" fill="#fff" fill-opacity=".78"/>
<path d="M70.2 54.6a4.3 4.3 0 1 0 0 7.2a3.5 3.5 0 1 1 0-7.2z" fill="#35486b"/>
<text x="75" y="57.6" font-family="Liberation Sans, sans-serif" font-weight="bold" font-size="3" fill="#fff" fill-opacity=".85" textLength="14" lengthAdjust="spacingAndGlyphs">TÜRKİYE</text>
<text x="75" y="61" font-family="Liberation Sans, sans-serif" font-weight="bold" font-size="3" fill="#fff" fill-opacity=".85" textLength="14" lengthAdjust="spacingAndGlyphs">YÜZYILI</text>
<text x="21.6" y="77.7" font-family="Liberation Sans, sans-serif" font-weight="bold" font-size="8.5" fill="#fff" fill-opacity=".93" stroke="#fff" stroke-width=".35" stroke-opacity=".9" textLength="83.5" lengthAdjust="spacingAndGlyphs">TÜRKİYE YÜZYILI</text>
<text x="28" y="93.4" font-family="Liberation Serif, serif" font-style="italic" font-size="14" fill="#fff" fill-opacity=".9" textLength="57" lengthAdjust="spacingAndGlyphs">maarif</text>
<path d="M96 80.5 L82.4 104.8" stroke="#fff" stroke-opacity=".9" stroke-width=".9" fill="none"/>
<text x="47.7" y="103.3" font-family="Liberation Sans, sans-serif" font-weight="bold" font-size="6.2" fill="#fff" fill-opacity=".93" stroke="#fff" stroke-width=".3" stroke-opacity=".9" textLength="30" lengthAdjust="spacingAndGlyphs">MODELİ</text>
<rect x="130.7" y="33.5" width="3.1" height="104" fill="#fff"/>
<g><rect x="219.5" y="141.3" width="20.5" height="6.3" rx="3" fill="#f1efee"/><rect x="213" y="147.6" width="21.5" height="7.2" rx="3.4" fill="#f4f1f0" transform="rotate(-3 224 151)"/><rect x="233" y="146.2" width="20" height="9" rx="3.6" fill="#ebe7e6" transform="rotate(-6 243 151)"/><ellipse cx="232" cy="156.3" rx="22" ry="1.6" fill="#7a3008" fill-opacity=".35"/></g>
<text filter="url(#glow)" x="137.8" y="55" font-family="Liberation Sans, sans-serif" font-weight="bold" font-style="italic" font-size="13" fill="#86f28a" stroke="#86f28a" stroke-width="0.38" textLength="147.7" lengthAdjust="spacingAndGlyphs">Din Kültürü ve Ahlak Bilgisi</text>
<text filter="url(#glow)" x="154.8" y="70.7" font-family="Liberation Sans, sans-serif" font-weight="bold" font-style="italic" font-size="13" fill="#86f28a" stroke="#86f28a" stroke-width="0.38" textLength="114.5" lengthAdjust="spacingAndGlyphs">Öğretim Programları</text>
<text x="146.6" y="89.8" font-family="Liberation Sans, sans-serif" font-weight="normal" font-size="7.6" fill="#fff" stroke="#fff" stroke-width="0.32" textLength="131.5" lengthAdjust="spacingAndGlyphs">Program Yapısı, Üniteler, Konular ve</text>
<text x="180.4" y="100" font-family="Liberation Sans, sans-serif" font-weight="normal" font-size="7.6" fill="#fff" stroke="#fff" stroke-width="0.32" textLength="63.6" lengthAdjust="spacingAndGlyphs">Öğrenme Çıktıları</text>
<text x="187" y="113.3" font-family="Liberation Sans, sans-serif" font-weight="normal" font-size="7.6" fill="#fff" stroke="#fff" stroke-width="0.32" textLength="50.0" lengthAdjust="spacingAndGlyphs">( 9.-12. Sınıf )</text>
</svg>
<div class="ct" style="top:181px;letter-spacing:0.05px">Din Kültürü ve Ahlak Bilgisi Öğretim</div>
<div class="ct" style="top:200px;letter-spacing:-0.05px">Programı</div>
<div class="au" style="letter-spacing:0.5px">Ahmet Şentürk</div>
</div>
<div class="abs card" style="left:421px;top:647px">
<svg class="thumb" width="295" height="165" viewBox="0 0 295 165">
<defs><linearGradient id="gg6" x1="0" y1="0" x2="0" y2="1"><stop offset="0" stop-color="#145d44"/><stop offset=".35" stop-color="#0a4e37"/><stop offset=".75" stop-color="#05452f"/><stop offset="1" stop-color="#033c2a"/></linearGradient><radialGradient id="gh6" gradientUnits="userSpaceOnUse" cx="250" cy="-5" r="110"><stop offset="0" stop-color="#7aa08e" stop-opacity=".26"/><stop offset=".6" stop-color="#5c8a76" stop-opacity=".1"/><stop offset="1" stop-color="#5c8a76" stop-opacity="0"/></radialGradient><linearGradient id="gs6" x1="0" y1="0" x2="0" y2="1"><stop offset="0" stop-color="#4e8e76"/><stop offset="1" stop-color="#346650"/></linearGradient><linearGradient id="wd6" x1="0" y1="0" x2="0" y2="1"><stop offset="0" stop-color="#c4682b"/><stop offset=".3" stop-color="#b1551d"/><stop offset=".8" stop-color="#a44a17"/><stop offset="1" stop-color="#8f3c12"/></linearGradient></defs>
<rect width="295" height="165" fill="url(#gg6)"/>
<rect width="295" height="165" fill="url(#gh6)"/>
<rect width="11" height="165" fill="url(#gs6)"/>
<rect x="255" y="0" width="40" height="165" fill="url(#gedge)"/>
<rect x="0" y="140" width="295" height="9" fill="#02231a" fill-opacity=".22"/>
<rect x="0" y="0" width="295" height="149" filter="url(#chalk)" opacity=".07"/>
<rect x="0" y="148.5" width="295" height="16.5" fill="url(#wd6)"/>
<rect x="11" y="0" width="102" height="165" fill="#c3672d"/>
<g fill="none" stroke="#fff" stroke-opacity=".62" stroke-width=".8"><circle cx="46.8" cy="58.2" r="6.6"/><circle cx="46.8" cy="58.2" r="4.3"/><path d="M43.6 60.3h6.4M46.8 55v5"/></g>
<rect x="57.1" y="51.5" width=".6" height="13.5" fill="#fff" fill-opacity=".45"/>
<circle cx="67.5" cy="58.2" r="6.6" fill="#fff" fill-opacity=".78"/>
<path d="M70.2 54.6a4.3 4.3 0 1 0 0 7.2a3.5 3.5 0 1 1 0-7.2z" fill="#c3672d"/>
<text x="75" y="57.6" font-family="Liberation Sans, sans-serif" font-weight="bold" font-size="3" fill="#fff" fill-opacity=".85" textLength="14" lengthAdjust="spacingAndGlyphs">TÜRKİYE</text>
<text x="75" y="61" font-family="Liberation Sans, sans-serif" font-weight="bold" font-size="3" fill="#fff" fill-opacity=".85" textLength="14" lengthAdjust="spacingAndGlyphs">YÜZYILI</text>
<text x="21.6" y="77.7" font-family="Liberation Sans, sans-serif" font-weight="bold" font-size="8.5" fill="#fff" fill-opacity=".93" stroke="#fff" stroke-width=".35" stroke-opacity=".9" textLength="83.5" lengthAdjust="spacingAndGlyphs">TÜRKİYE YÜZYILI</text>
<text x="28" y="93.4" font-family="Liberation Serif, serif" font-style="italic" font-size="14" fill="#fff" fill-opacity=".9" textLength="57" lengthAdjust="spacingAndGlyphs">maarif</text>
<path d="M96 80.5 L82.4 104.8" stroke="#fff" stroke-opacity=".9" stroke-width=".9" fill="none"/>
<text x="47.7" y="103.3" font-family="Liberation Sans, sans-serif" font-weight="bold" font-size="6.2" fill="#fff" fill-opacity=".93" stroke="#fff" stroke-width=".3" stroke-opacity=".9" textLength="30" lengthAdjust="spacingAndGlyphs">MODELİ</text>
<rect x="130.7" y="33.5" width="3.1" height="104" fill="#fff"/>
<g><rect x="219.5" y="141.3" width="20.5" height="6.3" rx="3" fill="#f1efee"/><rect x="213" y="147.6" width="21.5" height="7.2" rx="3.4" fill="#f4f1f0" transform="rotate(-3 224 151)"/><rect x="233" y="146.2" width="20" height="9" rx="3.6" fill="#ebe7e6" transform="rotate(-6 243 151)"/><ellipse cx="232" cy="156.3" rx="22" ry="1.6" fill="#7a3008" fill-opacity=".35"/></g>
<text filter="url(#glow)" x="137.7" y="65.4" font-family="Liberation Sans, sans-serif" font-weight="bold" font-style="italic" font-size="13" fill="#86f28a" stroke="#86f28a" stroke-width="0.38" textLength="148.3" lengthAdjust="spacingAndGlyphs">Din Kültürü ve Ahlak Bilgisi</text>
<text filter="url(#glow)" x="154.5" y="80.7" font-family="Liberation Sans, sans-serif" font-weight="bold" font-style="italic" font-size="13" fill="#86f28a" stroke="#86f28a" stroke-width="0.38" textLength="115.9" lengthAdjust="spacingAndGlyphs">Öğretim Programları</text>
<text x="152.4" y="99.7" font-family="Liberation Sans, sans-serif" font-weight="normal" font-size="7.6" fill="#fff" stroke="#fff" stroke-width="0.32" textLength="118.9" lengthAdjust="spacingAndGlyphs">Öğretme-Öğrenme Uygulamaları</text>
<text x="190.3" y="113.3" font-family="Liberation Sans, sans-serif" font-weight="normal" font-size="7.6" fill="#fff" stroke="#fff" stroke-width="0.32" textLength="44.0" lengthAdjust="spacingAndGlyphs">( 4.-8. Sınıf )</text>
</svg>
<div class="ct" style="top:181px;letter-spacing:0.05px">Din Kültürü ve Ahlak Bilgisi Öğretim</div>
<div class="ct" style="top:200px;letter-spacing:-0.05px">Programı</div>
<div class="au" style="letter-spacing:0.23px">Mustafa Yılmaz</div>
</div>
<div class="abs card" style="left:734px;top:647px">
<svg class="thumb" width="295" height="165" viewBox="0 0 295 165">
<defs><linearGradient id="gg7" x1="0" y1="0" x2="0" y2="1"><stop offset="0" stop-color="#145d44"/><stop offset=".35" stop-color="#0a4e37"/><stop offset=".75" stop-color="#05452f"/><stop offset="1" stop-color="#033c2a"/></linearGradient><radialGradient id="gh7" gradientUnits="userSpaceOnUse" cx="250" cy="-5" r="110"><stop offset="0" stop-color="#7aa08e" stop-opacity=".26"/><stop offset=".6" stop-color="#5c8a76" stop-opacity=".1"/><stop offset="1" stop-color="#5c8a76" stop-opacity="0"/></radialGradient><linearGradient id="gs7" x1="0" y1="0" x2="0" y2="1"><stop offset="0" stop-color="#4e8e76"/><stop offset="1" stop-color="#346650"/></linearGradient><linearGradient id="wd7" x1="0" y1="0" x2="0" y2="1"><stop offset="0" stop-color="#c4682b"/><stop offset=".3" stop-color="#b1551d"/><stop offset=".8" stop-color="#a44a17"/><stop offset="1" stop-color="#8f3c12"/></linearGradient></defs>
<rect width="295" height="165" fill="url(#gg7)"/>
<rect width="295" height="165" fill="url(#gh7)"/>
<rect width="11" height="165" fill="url(#gs7)"/>
<rect x="255" y="0" width="40" height="165" fill="url(#gedge)"/>
<rect x="0" y="140" width="295" height="9" fill="#02231a" fill-opacity=".22"/>
<rect x="0" y="0" width="295" height="149" filter="url(#chalk)" opacity=".07"/>
<rect x="0" y="148.5" width="295" height="16.5" fill="url(#wd7)"/>
<rect x="11" y="0" width="102" height="165" fill="#fd5659"/>
<g fill="none" stroke="#fff" stroke-opacity=".62" stroke-width=".8"><circle cx="46.8" cy="58.2" r="6.6"/><circle cx="46.8" cy="58.2" r="4.3"/><path d="M43.6 60.3h6.4M46.8 55v5"/></g>
<rect x="57.1" y="51.5" width=".6" height="13.5" fill="#fff" fill-opacity=".45"/>
<circle cx="67.5" cy="58.2" r="6.6" fill="#fff" fill-opacity=".78"/>
<path d="M70.2 54.6a4.3 4.3 0 1 0 0 7.2a3.5 3.5 0 1 1 0-7.2z" fill="#fd5659"/>
<text x="75" y="57.6" font-family="Liberation Sans, sans-serif" font-weight="bold" font-size="3" fill="#fff" fill-opacity=".85" textLength="14" lengthAdjust="spacingAndGlyphs">TÜRKİYE</text>
<text x="75" y="61" font-family="Liberation Sans, sans-serif" font-weight="bold" font-size="3" fill="#fff" fill-opacity=".85" textLength="14" lengthAdjust="spacingAndGlyphs">YÜZYILI</text>
<text x="21.6" y="77.7" font-family="Liberation Sans, sans-serif" font-weight="bold" font-size="8.5" fill="#fff" fill-opacity=".93" stroke="#fff" stroke-width=".35" stroke-opacity=".9" textLength="83.5" lengthAdjust="spacingAndGlyphs">TÜRKİYE YÜZYILI</text>
<text x="28" y="93.4" font-family="Liberation Serif, serif" font-style="italic" font-size="14" fill="#fff" fill-opacity=".9" textLength="57" lengthAdjust="spacingAndGlyphs">maarif</text>
<path d="M96 80.5 L82.4 104.8" stroke="#fff" stroke-opacity=".9" stroke-width=".9" fill="none"/>
<text x="47.7" y="103.3" font-family="Liberation Sans, sans-serif" font-weight="bold" font-size="6.2" fill="#fff" fill-opacity=".93" stroke="#fff" stroke-width=".3" stroke-opacity=".9" textLength="30" lengthAdjust="spacingAndGlyphs">MODELİ</text>
<rect x="130.7" y="33.5" width="3.1" height="104" fill="#fff"/>
<g><rect x="219.5" y="141.3" width="20.5" height="6.3" rx="3" fill="#f1efee"/><rect x="213" y="147.6" width="21.5" height="7.2" rx="3.4" fill="#f4f1f0" transform="rotate(-3 224 151)"/><rect x="233" y="146.2" width="20" height="9" rx="3.6" fill="#ebe7e6" transform="rotate(-6 243 151)"/><ellipse cx="232" cy="156.3" rx="22" ry="1.6" fill="#7a3008" fill-opacity=".35"/></g>
<text filter="url(#glow)" x="138" y="73.6" font-family="Liberation Sans, sans-serif" font-weight="bold" font-style="italic" font-size="13" fill="#86f28a" stroke="#86f28a" stroke-width="0.38" textLength="147.7" lengthAdjust="spacingAndGlyphs">Din Kültürü ve Ahlak Bilgisi</text>
<text filter="url(#glow)" x="154.4" y="88.9" font-family="Liberation Sans, sans-serif" font-weight="bold" font-style="italic" font-size="13" fill="#86f28a" stroke="#86f28a" stroke-width="0.38" textLength="115.1" lengthAdjust="spacingAndGlyphs">Öğretim Programları</text>
<text x="184.4" y="106.5" font-family="Liberation Sans, sans-serif" font-weight="normal" font-size="9.5" fill="#fff" stroke="#fff" stroke-width="0.3" textLength="60.2" lengthAdjust="spacingAndGlyphs">Özel Amaçları</text>
</svg>
<div class="ct" style="top:181px;letter-spacing:0.05px">Din Kültürü ve Ahlak Bilgisi Öğretim</div>
<div class="ct" style="top:200px;letter-spacing:-0.05px">Programı</div>
<div class="au" style="letter-spacing:0.23px">Mustafa Yılmaz</div>
</div>
<div class="abs card" style="left:1047px;top:647px">
<svg class="thumb" width="295" height="165" viewBox="0 0 295 165">
<defs><linearGradient id="gg8" x1="0" y1="0" x2="0" y2="1"><stop offset="0" stop-color="#145d44"/><stop offset=".35" stop-color="#0a4e37"/><stop offset=".75" stop-color="#05452f"/><stop offset="1" stop-color="#033c2a"/></linearGradient><radialGradient id="gh8" gradientUnits="userSpaceOnUse" cx="250" cy="-5" r="110"><stop offset="0" stop-color="#7aa08e" stop-opacity=".26"/><stop offset=".6" stop-color="#5c8a76" stop-opacity=".1"/><stop offset="1" stop-color="#5c8a76" stop-opacity="0"/></radialGradient><linearGradient id="gs8" x1="0" y1="0" x2="0" y2="1"><stop offset="0" stop-color="#4e8e76"/><stop offset="1" stop-color="#346650"/></linearGradient><linearGradient id="wd8" x1="0" y1="0" x2="0" y2="1"><stop offset="0" stop-color="#c4682b"/><stop offset=".3" stop-color="#b1551d"/><stop offset=".8" stop-color="#a44a17"/><stop offset="1" stop-color="#8f3c12"/></linearGradient></defs>
<rect width="295" height="165" fill="url(#gg8)"/>
<rect width="295" height="165" fill="url(#gh8)"/>
<rect width="11" height="165" fill="url(#gs8)"/>
<rect x="255" y="0" width="40" height="165" fill="url(#gedge)"/>
<rect x="0" y="140" width="295" height="9" fill="#02231a" fill-opacity=".22"/>
<rect x="0" y="0" width="295" height="149" filter="url(#chalk)" opacity=".07"/>
<rect x="0" y="148.5" width="295" height="16.5" fill="url(#wd8)"/>
<rect x="11" y="0" width="102" height="165" fill="#c3ad36"/>
<g fill="none" stroke="#fff" stroke-opacity=".62" stroke-width=".8"><circle cx="46.8" cy="58.2" r="6.6"/><circle cx="46.8" cy="58.2" r="4.3"/><path d="M43.6 60.3h6.4M46.8 55v5"/></g>
<rect x="57.1" y="51.5" width=".6" height="13.5" fill="#fff" fill-opacity=".45"/>
<circle cx="67.5" cy="58.2" r="6.6" fill="#fff" fill-opacity=".78"/>
<path d="M70.2 54.6a4.3 4.3 0 1 0 0 7.2a3.5 3.5 0 1 1 0-7.2z" fill="#c3ad36"/>
<text x="75" y="57.6" font-family="Liberation Sans, sans-serif" font-weight="bold" font-size="3" fill="#fff" fill-opacity=".85" textLength="14" lengthAdjust="spacingAndGlyphs">TÜRKİYE</text>
<text x="75" y="61" font-family="Liberation Sans, sans-serif" font-weight="bold" font-size="3" fill="#fff" fill-opacity=".85" textLength="14" lengthAdjust="spacingAndGlyphs">YÜZYILI</text>
<text x="21.6" y="77.7" font-family="Liberation Sans, sans-serif" font-weight="bold" font-size="8.5" fill="#fff" fill-opacity=".93" stroke="#fff" stroke-width=".35" stroke-opacity=".9" textLength="83.5" lengthAdjust="spacingAndGlyphs">TÜRKİYE YÜZYILI</text>
<text x="28" y="93.4" font-family="Liberation Serif, serif" font-style="italic" font-size="14" fill="#fff" fill-opacity=".9" textLength="57" lengthAdjust="spacingAndGlyphs">maarif</text>
<path d="M96 80.5 L82.4 104.8" stroke="#fff" stroke-opacity=".9" stroke-width=".9" fill="none"/>
<text x="47.7" y="103.3" font-family="Liberation Sans, sans-serif" font-weight="bold" font-size="6.2" fill="#fff" fill-opacity=".93" stroke="#fff" stroke-width=".3" stroke-opacity=".9" textLength="30" lengthAdjust="spacingAndGlyphs">MODELİ</text>
<rect x="130.7" y="33.5" width="3.1" height="104" fill="#fff"/>
<g><rect x="219.5" y="141.3" width="20.5" height="6.3" rx="3" fill="#f1efee"/><rect x="213" y="147.6" width="21.5" height="7.2" rx="3.4" fill="#f4f1f0" transform="rotate(-3 224 151)"/><rect x="233" y="146.2" width="20" height="9" rx="3.6" fill="#ebe7e6" transform="rotate(-6 243 151)"/><ellipse cx="232" cy="156.3" rx="22" ry="1.6" fill="#7a3008" fill-opacity=".35"/></g>
<text filter="url(#glow)" x="137.9" y="73.6" font-family="Liberation Sans, sans-serif" font-weight="bold" font-style="italic" font-size="13" fill="#86f28a" stroke="#86f28a" stroke-width="0.38" textLength="147.6" lengthAdjust="spacingAndGlyphs">Din Kültürü ve Ahlak Bilgisi</text>
<text filter="url(#glow)" x="154.3" y="88.9" font-family="Liberation Sans, sans-serif" font-weight="bold" font-style="italic" font-size="13" fill="#86f28a" stroke="#86f28a" stroke-width="0.38" textLength="115.1" lengthAdjust="spacingAndGlyphs">Öğretim Programları</text>
<text x="148.4" y="107" font-family="Liberation Sans, sans-serif" font-weight="normal" font-size="7.6" fill="#fff" stroke="#fff" stroke-width="0.32" textLength="129.2" lengthAdjust="spacingAndGlyphs">Ölçme Değerlendirme Uygulamaları</text>
</svg>
<div class="ct" style="top:181px;letter-spacing:0.05px">Din Kültürü ve Ahlak Bilgisi Öğretim</div>
<div class="ct" style="top:200px;letter-spacing:-0.05px">Programı</div>
<div class="au" style="letter-spacing:0.13px">Şafak Cansu Doğru</div>
</div>
<div id="botbar" class="abs"></div>
</body>
</html>
